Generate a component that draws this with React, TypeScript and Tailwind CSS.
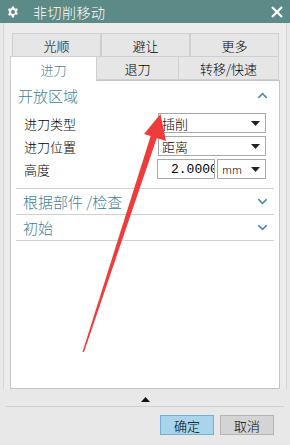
import { ChevronUp, ChevronDown } from "lucide-react"

const font = { fontFamily: '"Noto Sans CJK SC", "Noto Sans", sans-serif' }

const Gear = () => (
  <svg width="12" height="12" viewBox="0 0 24 24" fill="white">
    <path d="M10 1h4l.6 3.2a8 8 0 0 1 2.2 1.3l3.1-1.1 2 3.4-2.5 2.1a8 8 0 0 1 0 2.6l2.5 2.1-2 3.4-3.1-1.1a8 8 0 0 1-2.2 1.3L14 23h-4l-.6-3.2a8 8 0 0 1-2.2-1.3l-3.1 1.1-2-3.4 2.5-2.1a8 8 0 0 1 0-2.6L2.1 7.8l2-3.4 3.1 1.1a8 8 0 0 1 2.2-1.3L10 1zm2 7a4 4 0 1 0 0 8 4 4 0 0 0 0-8z" />
  </svg>
)

const Caret = () => (
  <svg width="9" height="5" viewBox="0 0 9 5" className="shrink-0">
    <path d="M0 0h9L4.5 5z" fill="#222" />
  </svg>
)

const Select = ({ value }: { value: string }) => (
  <div className="flex h-[20px] w-[108px] items-center justify-between border border-[#a9a9a9] bg-white pl-[3px] pr-[5px] text-[13px] leading-none text-black">
    <span>{value}</span>
    <Caret />
  </div>
)

export default function App() {
  return (
    <div
      className="relative flex h-[445px] w-[290px] flex-col overflow-hidden bg-[#e8e8e8] font-light text-black"
      style={font}
    >
      {/* title bar */}
      <div className="flex h-[23px] shrink-0 items-center bg-[#5c8a86] pl-[7px] pr-[7px] text-white">
        <Gear />
        <span className="ml-[14px] text-[14px] leading-none tracking-[0.5px]">非切削移动</span>
        <svg className="ml-auto" width="12" height="12" viewBox="0 0 12 12">
          <path d="M1 1l10 10M11 1L1 11" stroke="white" strokeWidth="2.2" />
        </svg>
      </div>

      {/* scroll frame */}
      <div className="mx-[3px] flex h-[366px] flex-col border-x border-[#d6d6d6] bg-[#ececec] px-[6px] pt-[10px]">
        <div className="ml-[2px] grid h-[23px] w-[267px] grid-cols-3 text-[13px]">
          {["光顺", "避让", "更多"].map((t) => (
            <div
              key={t}
              className="flex items-center justify-center border border-b-0 border-[#cfcfcf] bg-[#e6e6e6] leading-none"
            >
              {t}
            </div>
          ))}
        </div>
        <div className="flex h-[24px] text-[13px]">
          <div className="z-10 -mb-px flex w-[87px] items-center justify-center border border-b-0 border-[#cfcfcf] bg-white leading-none text-[#3f7f95]">
            进刀
          </div>
          <div className="flex w-[82px] items-center justify-center border border-l-0 border-[#cfcfcf] bg-[#e6e6e6] leading-none">
            退刀
          </div>
          <div className="flex w-[100px] items-center justify-center border border-l-0 border-[#cfcfcf] bg-[#e6e6e6] leading-none">
            转移/快速
          </div>
        </div>

        {/* panel */}
        <div className="flex w-[270px] flex-1 flex-col border border-[#c4c4c4] bg-white px-[5px] pb-[8px]">
          <div className="flex h-[28px] items-center justify-between pl-[2px] pr-[4px] text-[15px] leading-none text-[#3f7f95]">
            <span>开放区域</span>
            <ChevronUp size={15} strokeWidth={2.4} color="#4e8aa3" />
          </div>
          <div className="flex flex-col gap-[3px] pt-[4px] text-[13px] leading-none">
            <div className="flex items-center justify-between pl-[8px] pr-[8px]">
              <span>进刀类型</span>
              <Select value="插削" />
            </div>
            <div className="flex items-center justify-between pl-[8px] pr-[8px]">
              <span>进刀位置</span>
              <Select value="距离" />
            </div>
            <div className="flex items-center pl-[8px] pr-[8px]">
              <span>高度</span>
              <input
                readOnly
                value="2.00000"
                className="ml-auto h-[20px] w-[58px] border border-[#a9a9a9] bg-white pl-[13px] font-['Liberation_Mono'] text-[13px] text-black outline-none"
              />
              <div className="ml-[2px] flex h-[20px] w-[49px] items-center justify-between border border-[#a9a9a9] bg-white pl-[4px] pr-[5px] text-[11px]">
                <span>mm</span>
                <Caret />
              </div>
            </div>
          </div>
          <div className="mt-[9px] border-t border-[#cfcfcf]" />
          <div className="flex h-[26px] items-center justify-between border-b border-[#cfcfcf] pl-[7px] pr-[4px] text-[15px] leading-none text-[#3f7f95]">
            <span>根据部件 /检查</span>
            <ChevronDown size={15} strokeWidth={2.4} color="#4e8aa3" />
          </div>
          <div className="flex h-[26px] items-center justify-between border-b border-[#cfcfcf] pl-[7px] pr-[4px] text-[15px] leading-none text-[#3f7f95]">
            <span>初始</span>
            <ChevronDown size={15} strokeWidth={2.4} color="#4e8aa3" />
          </div>
        </div>
      </div>
      <div className="flex h-[17px] items-end justify-center pb-[4px]">
        <svg width="9" height="5" viewBox="0 0 9 5">
          <path d="M0 5h9L4.5 0z" fill="#111" />
        </svg>
      </div>

      {/* footer */}
      <div className="mx-[6px] border-t border-[#d0d0d0]" />
      <div className="flex justify-end gap-[6px] pr-[16px] pt-[8px] text-[13px]">
        <button className="flex h-[20px] w-[54px] items-center justify-center border border-[#74aed0] bg-[#a8d4ec] leading-none">
          确定
        </button>
        <button className="flex h-[20px] w-[54px] items-center justify-center border border-[#b5b5b5] bg-[#d4d4d4] leading-none">
          取消
        </button>
      </div>

      {/* red annotation arrow */}
      <svg className="pointer-events-none absolute left-0 top-0" width="290" height="445" viewBox="0 0 290 445">
        <path d="M82.5 352 L151 135 L157 137.5 L84 352 Z" fill="#ee3b3b" />
        <path d="M160.5 114 L144 134 L166 141 Z" fill="#ee3b3b" />
      </svg>
    </div>
  )
}
